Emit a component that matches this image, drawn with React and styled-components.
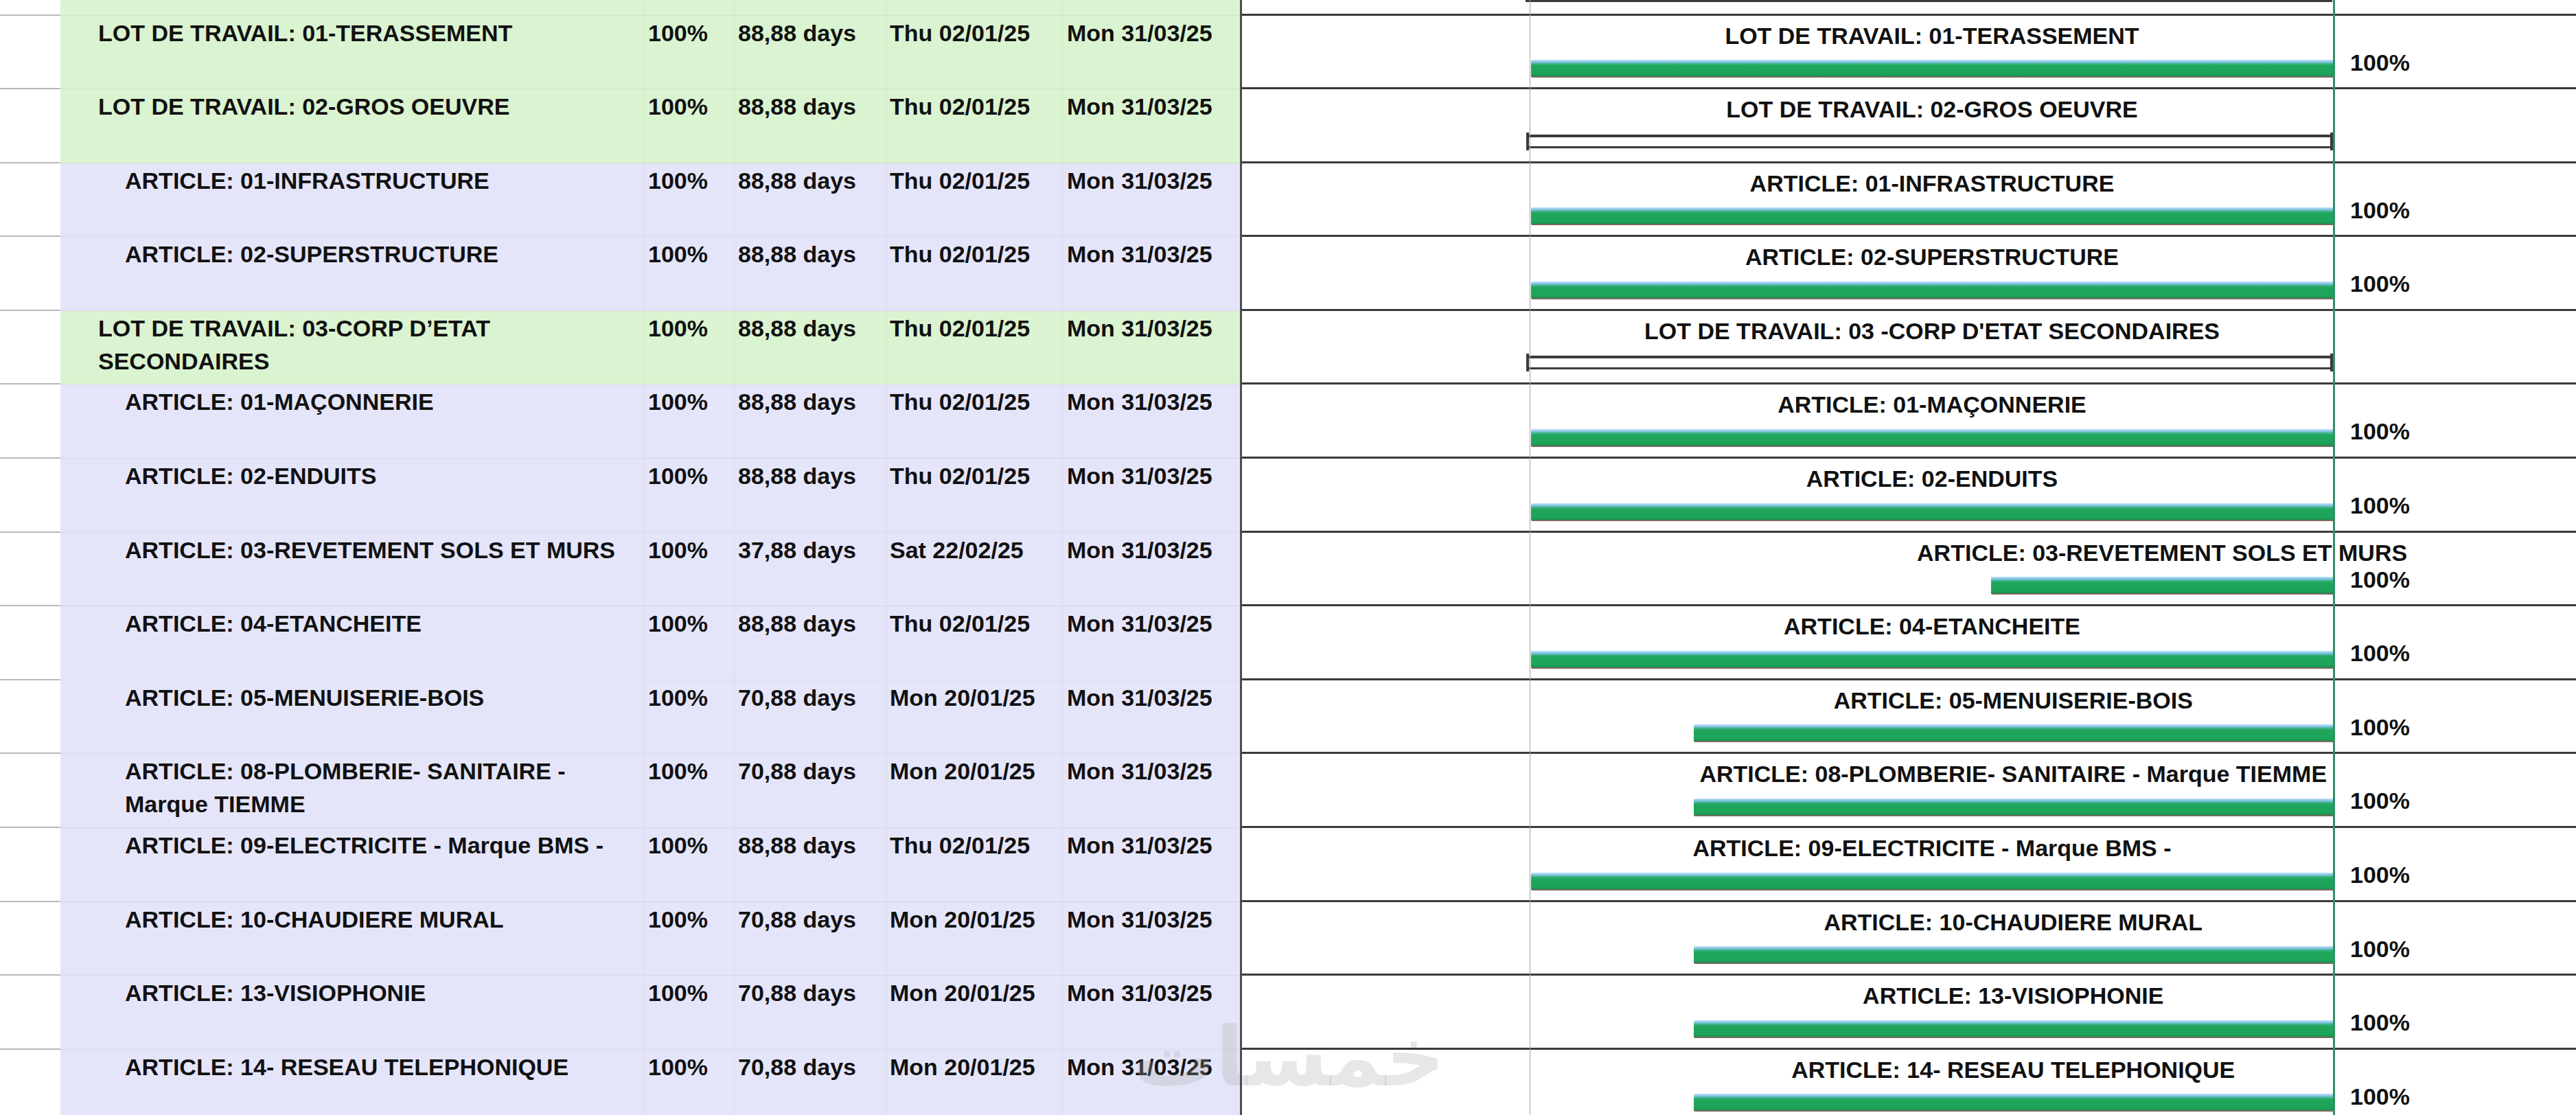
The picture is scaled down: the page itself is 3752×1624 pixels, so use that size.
import React from 'react';
import styled, { createGlobalStyle } from 'styled-components';

const GlobalStyle = createGlobalStyle`
  html, body {
    margin: 0;
    padding: 0;
    background: #fff;
    overflow: hidden;
  }
`;

const ROW_H = 107.6;
const FULL_DAYS = 88.88;
const CHART_W = 1168;
const PX_PER_DAY = CHART_W / FULL_DAYS;

const tones = { lot: '#daf3d0', article: '#e5e5fa' };

const tasks = [
  { name: 'LOT DE TRAVAIL: 01-TERASSEMENT', level: 'lot', days: 88.88, start: 'Thu 02/01/25', kind: 'bar', pct: true },
  { name: 'LOT DE TRAVAIL: 02-GROS OEUVRE', level: 'lot', days: 88.88, start: 'Thu 02/01/25', kind: 'summary' },
  { name: 'ARTICLE: 01-INFRASTRUCTURE', level: 'article', days: 88.88, start: 'Thu 02/01/25', kind: 'bar', pct: true },
  { name: 'ARTICLE: 02-SUPERSTRUCTURE', level: 'article', days: 88.88, start: 'Thu 02/01/25', kind: 'bar', pct: true },
  { name: 'LOT DE TRAVAIL: 03-CORP D’ETAT SECONDAIRES', chartName: "LOT DE TRAVAIL: 03 -CORP D'ETAT SECONDAIRES", level: 'lot', days: 88.88, start: 'Thu 02/01/25', kind: 'summary' },
  { name: 'ARTICLE: 01-MAÇONNERIE', level: 'article', days: 88.88, start: 'Thu 02/01/25', kind: 'bar', pct: true },
  { name: 'ARTICLE: 02-ENDUITS', level: 'article', days: 88.88, start: 'Thu 02/01/25', kind: 'bar', pct: true },
  { name: 'ARTICLE: 03-REVETEMENT SOLS ET MURS', level: 'article', days: 37.88, start: 'Sat 22/02/25', kind: 'bar', pct: true },
  { name: 'ARTICLE: 04-ETANCHEITE', level: 'article', days: 88.88, start: 'Thu 02/01/25', kind: 'bar', pct: true },
  { name: 'ARTICLE: 05-MENUISERIE-BOIS', level: 'article', days: 70.88, start: 'Mon 20/01/25', kind: 'bar', pct: true },
  { name: 'ARTICLE: 08-PLOMBERIE- SANITAIRE - Marque TIEMME', level: 'article', days: 70.88, start: 'Mon 20/01/25', kind: 'bar', pct: true },
  { name: 'ARTICLE: 09-ELECTRICITE - Marque BMS -', level: 'article', days: 88.88, start: 'Thu 02/01/25', kind: 'bar', pct: true },
  { name: 'ARTICLE: 10-CHAUDIERE MURAL', level: 'article', days: 70.88, start: 'Mon 20/01/25', kind: 'bar', pct: true },
  { name: 'ARTICLE: 13-VISIOPHONIE', level: 'article', days: 70.88, start: 'Mon 20/01/25', kind: 'bar', pct: true },
  { name: 'ARTICLE: 14- RESEAU TELEPHONIQUE', level: 'article', days: 70.88, start: 'Mon 20/01/25', kind: 'bar', pct: true },
];

const Page = styled.div`
  position: relative;
  width: 3752px;
  height: 1624px;
  overflow: hidden;
  background: #fff;
  color: #111;
  font-family: "Liberation Sans", Arial, sans-serif;
  font-weight: 700;
  font-size: 34px;
`;

const Row = styled.div`
  display: flex;
  height: ${p => p.$h}px;
`;

const Strip = styled.div`
  flex: none;
  width: 88px;
  box-sizing: border-box;
  border-bottom: 2px solid #b9b9b9;
`;

const Cell = styled.div`
  flex: none;
  width: ${p => p.$w}px;
  box-sizing: border-box;
  background: ${p => tones[p.$tone]};
  border-bottom: 1px solid rgba(0, 0, 0, 0.05);
  border-left: ${p => (p.$sep ? '1px solid rgba(0, 0, 0, 0.045)' : 'none')};
  padding: 1px 0 0 ${p => p.$pad}px;
  line-height: 48px;
  white-space: nowrap;
  overflow: hidden;
`;

const NameCell = styled(Cell)`
  padding-right: 22px;
  white-space: normal;
`;

const VRule = styled.div`
  flex: none;
  width: ${p => p.$w}px;
  background: ${p => p.$color};
  position: relative;
  z-index: 1;
`;

const GanttCell = styled.div`
  flex: none;
  width: ${p => p.$w}px;
  box-sizing: border-box;
  border-bottom: 3px solid #3b3b3b;
`;

const Chart = styled(GanttCell)`
  padding-top: 9px;
`;

const Track = styled.div`
  display: flex;
  flex-direction: column;
`;

const BarLabel = styled.div`
  display: flex;
  justify-content: center;
  height: 40px;
  line-height: 40px;
  white-space: nowrap;
`;

const Bar = styled.div`
  margin-top: 15.5px;
  height: 24px;
  border-bottom: 2px solid #7a6a60;
  border-radius: 2px 0 0 2px;
  background: linear-gradient(
    to bottom,
    #c4e2f8 0%,
    #86c6e8 13%,
    #3cb184 25%,
    #1fa65b 36%,
    #1da45a 85%,
    #17924f 100%
  );
`;

const Summary = styled.div`
  margin: 13.5px 0 0 -7px;
  height: 26px;
  box-sizing: border-box;
  border-left: 4px solid #3b3b3b;
  border-right: 4px solid #3b3b3b;
  background:
    linear-gradient(#3b3b3b, #3b3b3b) 0 3px / 100% 4px no-repeat,
    linear-gradient(#3b3b3b, #3b3b3b) 0 20px / 100% 3px no-repeat;
`;

const SummaryTail = styled.div`
  margin-left: -7px;
  width: 1175px;
  height: 3px;
  background: #3b3b3b;
`;

const PctCell = styled(GanttCell)`
  padding: 48px 0 0 22px;
  line-height: 40px;
`;

const Watermark = styled.div`
  position: absolute;
  left: 1650px;
  top: 1470px;
  font-family: "DejaVu Sans", sans-serif;
  font-size: 120px;
  font-weight: 700;
  color: rgba(170, 170, 170, 0.28);
  pointer-events: none;
`;

const TableCells = ({ task, tone }) => (
  <>
    <Strip />
    <NameCell $w={849} $tone={tone} $pad={task ? (task.level === 'lot' ? 55 : 94) : 0}>
      {task && task.name}
    </NameCell>
    <Cell $w={132} $tone={tone} $pad={6} $sep>{task && '100%'}</Cell>
    <Cell $w={221} $tone={tone} $pad={5} $sep>{task && `${task.days.toFixed(2).replace('.', ',')} days`}</Cell>
    <Cell $w={257} $tone={tone} $pad={5} $sep>{task && task.start}</Cell>
    <Cell $w={259} $tone={tone} $pad={6} $sep>{task && 'Mon 31/03/25'}</Cell>
    <VRule $w={3} $color="#4d4d4d" />
  </>
);

const TaskRow = ({ task }) => {
  const width = task.days * PX_PER_DAY;
  const offset = (FULL_DAYS - task.days) * PX_PER_DAY + 1;
  return (
    <Row $h={ROW_H}>
      <TableCells task={task} tone={task.level} />
      <GanttCell $w={418.5} />
      <VRule $w={1.5} $color="#a3a3a3" />
      <Chart $w={1169}>
        <Track style={{ marginLeft: offset, width }}>
          <BarLabel>{task.chartName || task.name}</BarLabel>
          {task.kind === 'bar' ? <Bar /> : <Summary />}
        </Track>
      </Chart>
      <VRule $w={3} $color="#2f8f66" />
      <PctCell $w={351}>{task.pct && '100%'}</PctCell>
    </Row>
  );
};

export default function App() {
  return (
    <Page>
      <GlobalStyle />
      <Row $h={22.5}>
        <TableCells tone="lot" />
        <GanttCell $w={418.5} />
        <VRule $w={1.5} $color="#a3a3a3" />
        <GanttCell $w={1169}>
          <SummaryTail />
        </GanttCell>
        <VRule $w={3} $color="#2f8f66" />
        <GanttCell $w={351} />
      </Row>
      {tasks.map(task => (
        <TaskRow key={task.name} task={task} />
      ))}
      <Watermark>خمسات</Watermark>
    </Page>
  );
}
